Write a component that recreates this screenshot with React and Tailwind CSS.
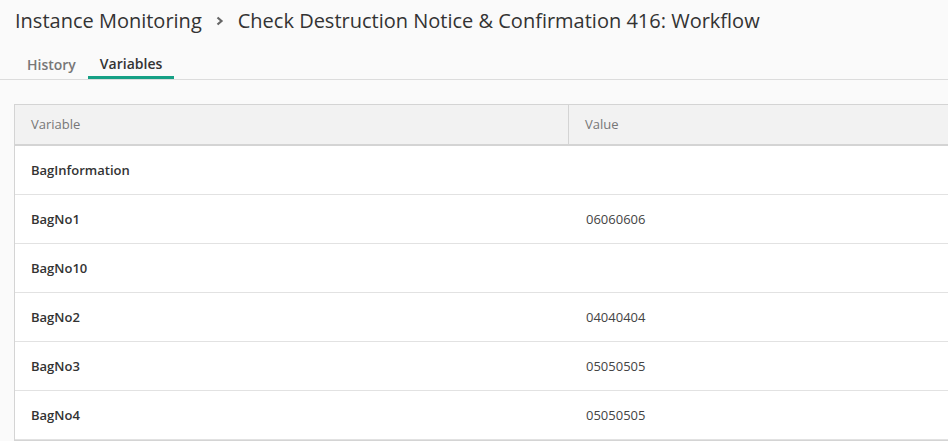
export default function App() {
  const rows = [
    ["BagInformation", ""],
    ["BagNo1", "06060606"],
    ["BagNo10", ""],
    ["BagNo2", "04040404"],
    ["BagNo3", "05050505"],
    ["BagNo4", "05050505"],
  ];
  return (
    <div className="w-[948px] h-[441px] overflow-hidden bg-[#fafafa] font-['Open_Sans',sans-serif]">
      <div className="h-[41px] flex items-center pl-[15px] text-[20px] text-[#333] leading-none">
        <span>Instance Monitoring</span>
        <svg className="mx-[14px] mt-[1px]" width="8" height="10" viewBox="0 0 8 10">
          <path d="M1.5 1.5 L5.5 5 L1.5 8.5" fill="none" stroke="#666" strokeWidth="2.2" />
        </svg>
        <span>Check Destruction Notice &amp; Confirmation 416: Workflow</span>
      </div>
      <div className="flex pl-[15px] border-b border-[#dcdcdc] h-[39px] items-end">
        <div className="px-[12px] h-[37px] flex items-center pt-[8px] text-[14px] font-semibold text-[#777]">History</div>
        <div className="px-[12px] h-[37px] flex items-center pt-[8px] text-[14px] font-semibold text-[#333] border-b-[3px] border-[#16a085]">Variables</div>
      </div>
      <div className="pt-[24px] pl-[14px]">
        <div className="w-[1110px] border border-[#d4d4d4] bg-white">
          <div className="flex h-[41px] bg-[#f2f2f2] border-b-2 border-[#d4d4d4] text-[13px] text-[#777]">
            <div className="w-[554px] flex items-center pl-[16px] border-r border-[#d4d4d4]">Variable</div>
            <div className="flex-1 flex items-center pl-[16px]">Value</div>
          </div>
          {rows.map(([k, v]) => (
            <div key={k} className="flex h-[49px] pt-[2px] border-b border-[#e2e2e2] text-[13px]">
              <div className="w-[554px] flex items-center pl-[16px] font-semibold text-[#333]">{k}</div>
              <div className="flex-1 flex items-center pl-[17px] text-[#444]">{v}</div>
            </div>
          ))}
        </div>
      </div>
    </div>
  );
}
